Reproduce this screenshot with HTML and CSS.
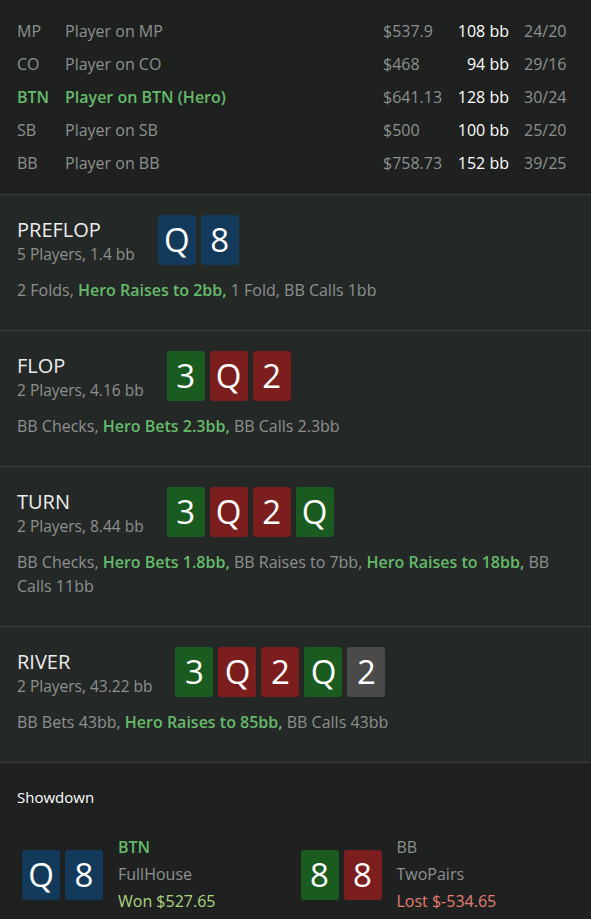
FILE: index.html
```html
<!DOCTYPE html>
<html lang="en">
<head>
    <meta charset="UTF-8">
    <meta name="viewport" content="width=device-width, initial-scale=1.0">
    <title>Hand History</title>
    <link rel="stylesheet" href="styles.css">
</head>
<body>
    <div class="players">
        <div class="player-row">
            <span class="pos">MP</span>
            <span class="name">Player on MP</span>
            <span class="stack">$537.9</span>
            <span class="bb">108 bb</span>
            <span class="ratio">24/20</span>
        </div>
        <div class="player-row">
            <span class="pos">CO</span>
            <span class="name">Player on CO</span>
            <span class="stack">$468</span>
            <span class="bb">94 bb</span>
            <span class="ratio">29/16</span>
        </div>
        <div class="player-row hero">
            <span class="pos">BTN</span>
            <span class="name">Player on BTN (Hero)</span>
            <span class="stack">$641.13</span>
            <span class="bb">128 bb</span>
            <span class="ratio">30/24</span>
        </div>
        <div class="player-row">
            <span class="pos">SB</span>
            <span class="name">Player on SB</span>
            <span class="stack">$500</span>
            <span class="bb">100 bb</span>
            <span class="ratio">25/20</span>
        </div>
        <div class="player-row">
            <span class="pos">BB</span>
            <span class="name">Player on BB</span>
            <span class="stack">$758.73</span>
            <span class="bb">152 bb</span>
            <span class="ratio">39/25</span>
        </div>
    </div>

    <div class="street">
        <div class="street-header">
            <div class="street-title">
                <h2>PREFLOP</h2>
                <p>5 Players, 1.4 bb</p>
            </div>
            <div class="cards">
                <span class="card blue">Q</span>
                <span class="card blue">8</span>
            </div>
        </div>
        <p class="actions">2 Folds, <b>Hero Raises to 2bb,</b> 1 Fold, BB Calls 1bb</p>
    </div>

    <div class="street">
        <div class="street-header">
            <div class="street-title">
                <h2>FLOP</h2>
                <p>2 Players, 4.16 bb</p>
            </div>
            <div class="cards">
                <span class="card green">3</span>
                <span class="card red">Q</span>
                <span class="card red">2</span>
            </div>
        </div>
        <p class="actions">BB Checks, <b>Hero Bets 2.3bb,</b> BB Calls 2.3bb</p>
    </div>

    <div class="street">
        <div class="street-header">
            <div class="street-title">
                <h2>TURN</h2>
                <p>2 Players, 8.44 bb</p>
            </div>
            <div class="cards">
                <span class="card green">3</span>
                <span class="card red">Q</span>
                <span class="card red">2</span>
                <span class="card green">Q</span>
            </div>
        </div>
        <p class="actions">BB Checks, <b>Hero Bets 1.8bb,</b> BB Raises to 7bb, <b>Hero Raises to 18bb,</b> BB<br>Calls 11bb</p>
    </div>

    <div class="street">
        <div class="street-header">
            <div class="street-title">
                <h2>RIVER</h2>
                <p>2 Players, 43.22 bb</p>
            </div>
            <div class="cards">
                <span class="card green">3</span>
                <span class="card red">Q</span>
                <span class="card red">2</span>
                <span class="card green">Q</span>
                <span class="card grey">2</span>
            </div>
        </div>
        <p class="actions">BB Bets 43bb, <b>Hero Raises to 85bb,</b> BB Calls 43bb</p>
    </div>

    <div class="showdown">
        <h3>Showdown</h3>
        <div class="hands">
            <div class="hand">
                <div class="cards">
                    <span class="card blue">Q</span>
                    <span class="card blue">8</span>
                </div>
                <div class="hand-info">
                    <span class="hand-pos hero-pos">BTN</span>
                    <span class="hand-name">FullHouse</span>
                    <span class="won">Won $527.65</span>
                </div>
            </div>
            <div class="hand">
                <div class="cards">
                    <span class="card green">8</span>
                    <span class="card red">8</span>
                </div>
                <div class="hand-info">
                    <span class="hand-pos">BB</span>
                    <span class="hand-name">TwoPairs</span>
                    <span class="lost">Lost $-534.65</span>
                </div>
            </div>
        </div>
    </div>
</body>
</html>
```

FILE: styles.css
```css
/* hand history, dark theme */
body {
    font-family: "Open Sans", "Noto Sans", sans-serif;
    background-color: #1e2120;
    color: #8d918f;
    margin: 0;
    padding: 0;
    font-size: 16px;
}

p, h2, h3 {
    margin: 0;
}

.players {
    padding: 15px 17px 14px;
    border-bottom: 1px solid #3b3f3d;
}

.player-row {
    display: grid;
    grid-template-columns: 48px 1fr 64px 62px 65px;
    line-height: 33px;
}

.player-row .bb {
    color: #fff;
    text-align: right;
}

.player-row .ratio {
    padding-left: 15px;
}

.player-row.hero .pos,
.player-row.hero .name {
    color: #66bb6a;
    font-weight: 600;
}

.street {
    background-color: #242827;
    border-bottom: 1px solid #3b3f3d;
    padding: 20px 17px 28px;
}

.street:last-of-type {
    border-bottom: none;
}

.street-header {
    display: flex;
    align-items: flex-end;
    gap: 23px;
    margin-bottom: 13px;
}

.street-title h2 {
    font-size: 20px;
    font-weight: 400;
    color: #eee;
    line-height: 26px;
}

.street-title p {
    font-size: 15.5px;
    line-height: 22px;
}

.cards {
    display: flex;
    gap: 5px;
}

.card {
    display: block;
    width: 38px;
    height: 50px;
    line-height: 50px;
    text-align: center;
    font-size: 33px;
    color: #fff;
    border-radius: 3px;
}

.card.blue {
    background-color: #133a5a;
}

.card.green {
    background-color: #1a5c1f;
}

.card.red {
    background-color: #7c1e1e;
}

.card.grey {
    background-color: #4a4a4a;
}

.actions {
    line-height: 24px;
}

.actions b {
    color: #66bb6a;
    font-weight: 600;
}

.showdown {
    padding: 23px 17px 0;
}

.showdown h3 {
    font-size: 15px;
    font-weight: 400;
    color: #fff;
    line-height: 22px;
    margin-bottom: 26px;
}

.hands {
    display: grid;
    grid-template-columns: 1fr 1fr;
}

.hand {
    display: flex;
    align-items: center;
    gap: 15px;
    padding-left: 5px;
}

.hand-info {
    display: flex;
    flex-direction: column;
    line-height: 27px;
}

.hand-pos.hero-pos {
    color: #66bb6a;
    font-weight: 600;
}

.won {
    color: #aed581;
}

.lost {
    color: #e57f73;
}
```
